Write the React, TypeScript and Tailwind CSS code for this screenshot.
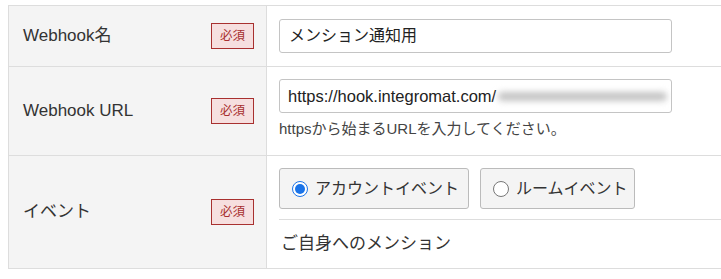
const font = "font-['Liberation_Sans','Noto_Sans_CJK_JP',sans-serif]";

function Required() {
  return (
    <span className="inline-flex h-[26px] w-[43px] items-center justify-center border border-[#a8302f] bg-[#f6dfdf] text-[12.5px] text-[#a8302f]">
      必須
    </span>
  );
}

function Label({ text }: { text: string }) {
  return (
    <div className="flex items-center justify-between bg-[#f4f4f4] pl-[14px] pr-[12px] text-[17px] text-[#333]">
      <span>{text}</span>
      <Required />
    </div>
  );
}

function Radio({ checked }: { checked?: boolean }) {
  return checked ? (
    <span className="flex h-[16px] w-[16px] items-center justify-center rounded-full border-[1.5px] border-[#1a73e8] bg-white">
      <span className="h-[10px] w-[10px] rounded-full bg-[#1a73e8]" />
    </span>
  ) : (
    <span className="h-[16px] w-[16px] rounded-full border border-[#777] bg-white" />
  );
}

export default function App() {
  return (
    <div className={`w-[721px] h-[279px] overflow-hidden bg-white pl-2 pt-[5px] ${font}`}>
      <div className="grid w-[760px] grid-cols-[257px_1fr] border border-[#dddddd] [&>*]:border-[#dddddd]">
        <Label text="Webhook名" />
        <div className="flex h-[60px] items-center border-l px-3">
          <div className="flex h-[34px] w-[393px] items-center rounded-[3px] border border-[#c4c4c4] px-[9px] text-[16px] text-[#222]">
            メンション通知用
          </div>
        </div>

        <div className="col-span-2 border-t" />

        <Label text="Webhook URL" />
        <div className="flex h-[88px] flex-col border-l px-3 pt-3">
          <div className="flex h-[34px] w-[393px] items-center overflow-hidden rounded-[3px] border border-[#c4c4c4] pl-[8px] pr-[4px] text-[16.5px] text-[#222]">
            <span className="shrink-0">https://hook.integromat.com/</span>
            <span className="ml-[2px] h-[9px] flex-1 rounded-full bg-[#c4c4c4] blur-[3px]" />
          </div>
          <p className="mt-[6px] text-[15px] leading-[20px] text-[#444]">httpsから始まるURLを入力してください。</p>
        </div>

        <div className="col-span-2 border-t" />

        <Label text="イベント" />
        <div className="flex h-[112px] flex-col border-l pl-3 pt-3">
          <div className="flex gap-[11px]">
            <div className="flex h-[41px] w-[190px] items-center gap-[7px] rounded-[3px] border border-[#bbbbbb] bg-[#f4f4f4] pl-[12px] text-[16px] text-[#333]">
              <Radio checked />
              アカウントイベント
            </div>
            <div className="flex h-[41px] w-[155px] items-center gap-[7px] rounded-[3px] border border-[#bbbbbb] bg-[#f4f4f4] pl-[12px] text-[16px] text-[#333]">
              <Radio />
              ルームイベント
            </div>
          </div>
          <div className="mt-[10px] border-t border-[#dddddd] pl-[2px] pt-[11px] text-[17px] text-[#333]">
            ご自身へのメンション
          </div>
        </div>
      </div>
    </div>
  );
}
